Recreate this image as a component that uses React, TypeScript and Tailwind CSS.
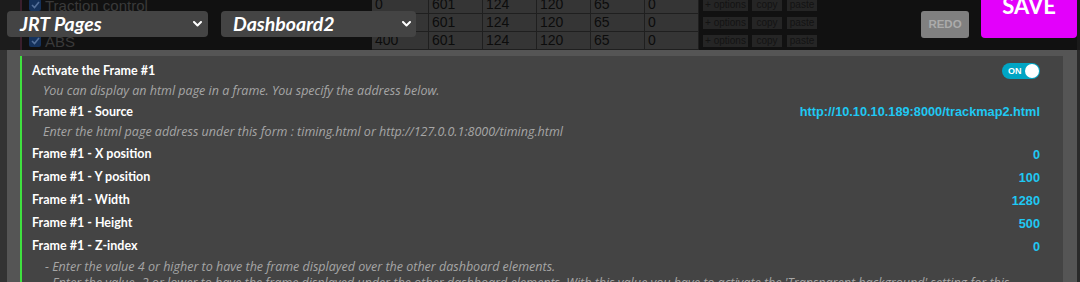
import React from "react";

const cellVals = [
  ["0", "601", "124", "120", "65", "0"],
  ["", "601", "124", "120", "65", "0"],
  ["400", "601", "124", "120", "65", "0"],
];
const rowLabels = ["Traction control", "", "ABS"];
const cellW = ["w-[57px]", "w-[54px]", "w-[54px]", "w-[54px]", "w-[54px]", "w-[54px]"];
const arial = { fontFamily: '"Liberation Sans", Arial, sans-serif' };
const lato = { fontFamily: 'Lato, "Open Sans", sans-serif' };
const openSans = { fontFamily: '"Open Sans", Lato, sans-serif' };

function Chevron() {
  return (
    <svg width="9" height="6" viewBox="0 0 9 6" className="shrink-0">
      <path d="M1 1 L4.5 4.5 L8 1" fill="none" stroke="#fff" strokeWidth="2" strokeLinecap="round" strokeLinejoin="round" />
    </svg>
  );
}

function BgRow({ label, vals }: { label: string; vals: string[] }) {
  return (
    <div className="flex h-[18px]">
      <div className="w-[20px] bg-[#1c1c1c]" />
      <div className="w-[2px] bg-[#3a1f2c]" />
      <div className="w-[350px] flex items-center pl-[7px] gap-[4px]">
        <div className="w-[12px] h-[12px] rounded-[2px] bg-[#15325c] flex items-center justify-center">
          <svg width="9" height="8" viewBox="0 0 9 8">
            <path d="M1 4 L3.5 6.5 L8 1" fill="none" stroke="#54709a" strokeWidth="1.6" />
          </svg>
        </div>
        <span className="text-[15px] text-[#3a3a3a] leading-none" style={arial}>
          {label}
        </span>
      </div>
      {vals.map((v, i) => (
        <div
          key={i}
          className={`${cellW[i]} h-full bg-[#353535] border-r border-b border-[#1f1f1f] flex items-center pl-[3px] text-[14px] text-[#0c0c0c]`}
          style={arial}
        >
          {v}
        </div>
      ))}
      <div className="flex items-center pl-[4px] gap-[4px]">
        <div className="w-[45px] h-[12px] bg-[#252525] text-[10px] leading-[12px] text-center text-[#131313]" style={arial}>+ options</div>
        <div className="w-[30px] h-[12px] bg-[#252525] text-[10px] leading-[12px] text-center text-[#131313]" style={arial}>copy</div>
        <div className="w-[30px] h-[12px] bg-[#252525] text-[10px] leading-[12px] text-center text-[#131313] ml-[1px]" style={arial}>paste</div>
      </div>
    </div>
  );
}

function Label({ children }: { children: React.ReactNode }) {
  return <span className="text-[12.5px] font-bold text-white" style={lato}>{children}</span>;
}
function Value({ children }: { children: React.ReactNode }) {
  return <span className="text-[12.75px] font-bold text-[#1fc8f3]" style={arial}>{children}</span>;
}
function Desc({ children }: { children: React.ReactNode }) {
  return (
    <div className="h-[21px] flex items-center pl-[11px] text-[12.5px] italic text-[#a6a6a6] whitespace-nowrap" style={openSans}>
      {children}
    </div>
  );
}

export default function App() {
  const rows: [string, string][] = [
    ["Frame #1 - X position", "0"],
    ["Frame #1 - Y position", "100"],
    ["Frame #1 - Width", "1280"],
    ["Frame #1 - Height", "500"],
    ["Frame #1 - Z-index", "0"],
  ];
  return (
    <div className="w-[1080px] h-[282px] overflow-hidden bg-[#555555] flex flex-col">
      {/* top bar */}
      <div className="relative h-[50px] shrink-0 bg-[#111111] overflow-hidden">
        <div className="-mt-[4px] flex flex-col">
          {rowLabels.map((l, i) => (
            <BgRow key={i} label={l} vals={cellVals[i]} />
          ))}
        </div>
        <div className="absolute left-[7px] top-[11px] w-[201px] h-[26px] bg-[#444444] rounded-[4px] flex items-center justify-between pl-[13px] pr-[6px]">
          <span className="text-[19.5px] font-bold italic text-white leading-none" style={lato}>JRT Pages</span>
          <Chevron />
        </div>
        <div className="absolute left-[221px] top-[11px] w-[195px] h-[26px] bg-[#444444] rounded-[4px] flex items-center justify-between pl-[12px] pr-[5px]">
          <span className="text-[19.5px] font-bold italic text-white leading-none" style={lato}>Dashboard2</span>
          <Chevron />
        </div>
        <div className="absolute left-[921px] top-[11px] w-[48px] h-[27px] bg-[#808080] rounded-[3px] flex items-center justify-center">
          <span className="text-[11.5px] font-bold text-[#ababab]" style={arial}>REDO</span>
        </div>
        <div className="absolute left-[981px] top-[-26px] w-[96px] h-[64px] bg-[#e300fb] rounded-[4px] flex items-center justify-center">
          <span className="text-[22px] font-bold text-white leading-none" style={lato}>SAVE</span>
        </div>
        <div className="absolute right-0 top-0 w-[3px] h-full bg-[#1a1a1a]" />
      </div>

      {/* body */}
      <div className="flex flex-1 min-h-0">
        <div className="w-[7px] bg-[#333333]" />
        <div className="flex-1 flex flex-col pt-[6px]">
          <div className="h-[1px] bg-[#3a3a3a]" />
          <div className="flex-1 pl-[13px] pr-[14px]">
            <div className="h-full bg-[#444444] border-l-2 border-[#3fe13f] pl-[10px] pr-[23px] pt-[5px] flex flex-col">
              <div className="h-[20px] flex items-center justify-between">
                <Label>Activate the Frame #1</Label>
                <div className="w-[38px] h-[16px] rounded-full bg-[#00a5c4] flex items-center justify-between pl-[6px] pr-[1px]">
                  <span className="text-[9px] font-bold text-white leading-none" style={arial}>ON</span>
                  <div className="w-[14px] h-[14px] rounded-full bg-white" />
                </div>
              </div>
              <Desc>You can display an html page in a frame. You specify the address below.</Desc>
              <div className="h-[20px] flex items-center justify-between">
                <Label>Frame #1 - Source</Label>
                <Value>http://10.10.10.189:8000/trackmap2.html</Value>
              </div>
              <Desc>Enter the html page address under this form : timing.html or http://127.0.0.1:8000/timing.html</Desc>
              {rows.map(([l, v]) => (
                <div key={l} className="h-[23px] flex items-center justify-between">
                  <Label>{l}</Label>
                  <Value>{v}</Value>
                </div>
              ))}
              <div className="pl-[13px] text-[12.5px] italic text-[#a6a6a6] leading-[16px] pt-[1px] whitespace-nowrap" style={openSans}>
                <div>- Enter the value 4 or higher to have the frame displayed over the other dashboard elements.</div>
                <div>- Enter the value -2 or lower to have the frame displayed under the other dashboard elements. With this value you have to activate the 'Transparent background' setting for this</div>
                <div>dashboard.</div>
              </div>
            </div>
          </div>
        </div>
        <div className="w-[3px] bg-[#2a2a2a]" />
      </div>
    </div>
  );
}
